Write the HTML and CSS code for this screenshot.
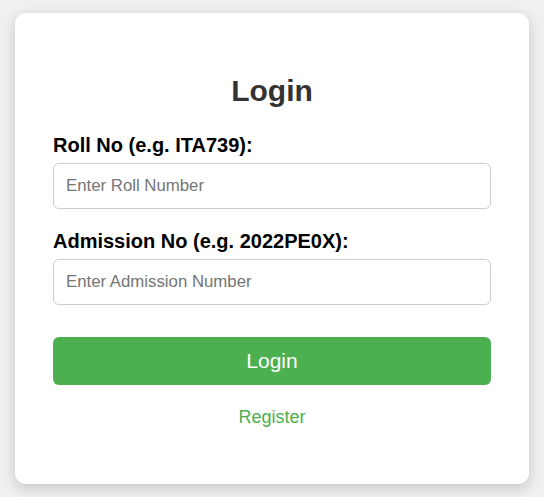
FILE: index.html
```html
<!DOCTYPE html>
<html lang="en">
<head>
<meta charset="utf-8">
<title>Login</title>
<link rel="stylesheet" href="styles.css">
</head>
<body>
  <div class="card">
    <h2 class="title">Login</h2>
    <form class="form">
      <label class="label" for="roll">Roll No (e.g. ITA739):</label>
      <input class="input" id="roll" type="text" placeholder="Enter Roll Number">
      <label class="label" for="adm">Admission No (e.g. 2022PE0X):</label>
      <input class="input" id="adm" type="text" placeholder="Enter Admission Number">
      <button class="btn" type="button">Login</button>
    </form>
    <p class="register"><a class="register-link" href="#">Register</a></p>
  </div>
</body>
</html>
```
FILE: styles.css
```css
* { box-sizing: border-box; }
html, body { margin: 0; }
body {
  font-family: "Liberation Sans", Arial, sans-serif;
  background: #f0f0f0;
  min-height: 100vh;
  padding: 0 15px;
  display: flex;
  align-items: center;
  justify-content: center;
}
.card {
  width: 100%;
  background: #fff;
  border-radius: 11px;
  padding: 38px;
  box-shadow: 0 4px 14px rgba(0,0,0,0.18);
}
.title {
  margin: 22px 0 26px;
  font-size: 30px;
  line-height: 35px;
  text-align: center;
  color: #333;
  font-weight: bold;
}
.form { display: flex; flex-direction: column; }
.label {
  display: block;
  font-size: 20px;
  line-height: 22px;
  font-weight: bold;
  color: #000;
  margin-bottom: 7px;
}
.input {
  display: block;
  width: 100%;
  height: 46px;
  padding: 0 12px;
  font-family: inherit;
  font-size: 16.8px;
  border: 1px solid #ccc;
  border-radius: 6px;
  margin-bottom: 21px;
  color: #333;
}
.input::placeholder { color: #757575; }
.btn {
  margin-top: 11px;
  height: 48px;
  width: 100%;
  border: none;
  border-radius: 6px;
  background: #4caf50;
  color: #fff;
  font-family: inherit;
  font-size: 21px;
}
.register {
  margin: 22px 0 18px;
  text-align: center;
  font-size: 18px;
  line-height: 21px;
}
.register-link { color: #4caf50; text-decoration: none; }
```
